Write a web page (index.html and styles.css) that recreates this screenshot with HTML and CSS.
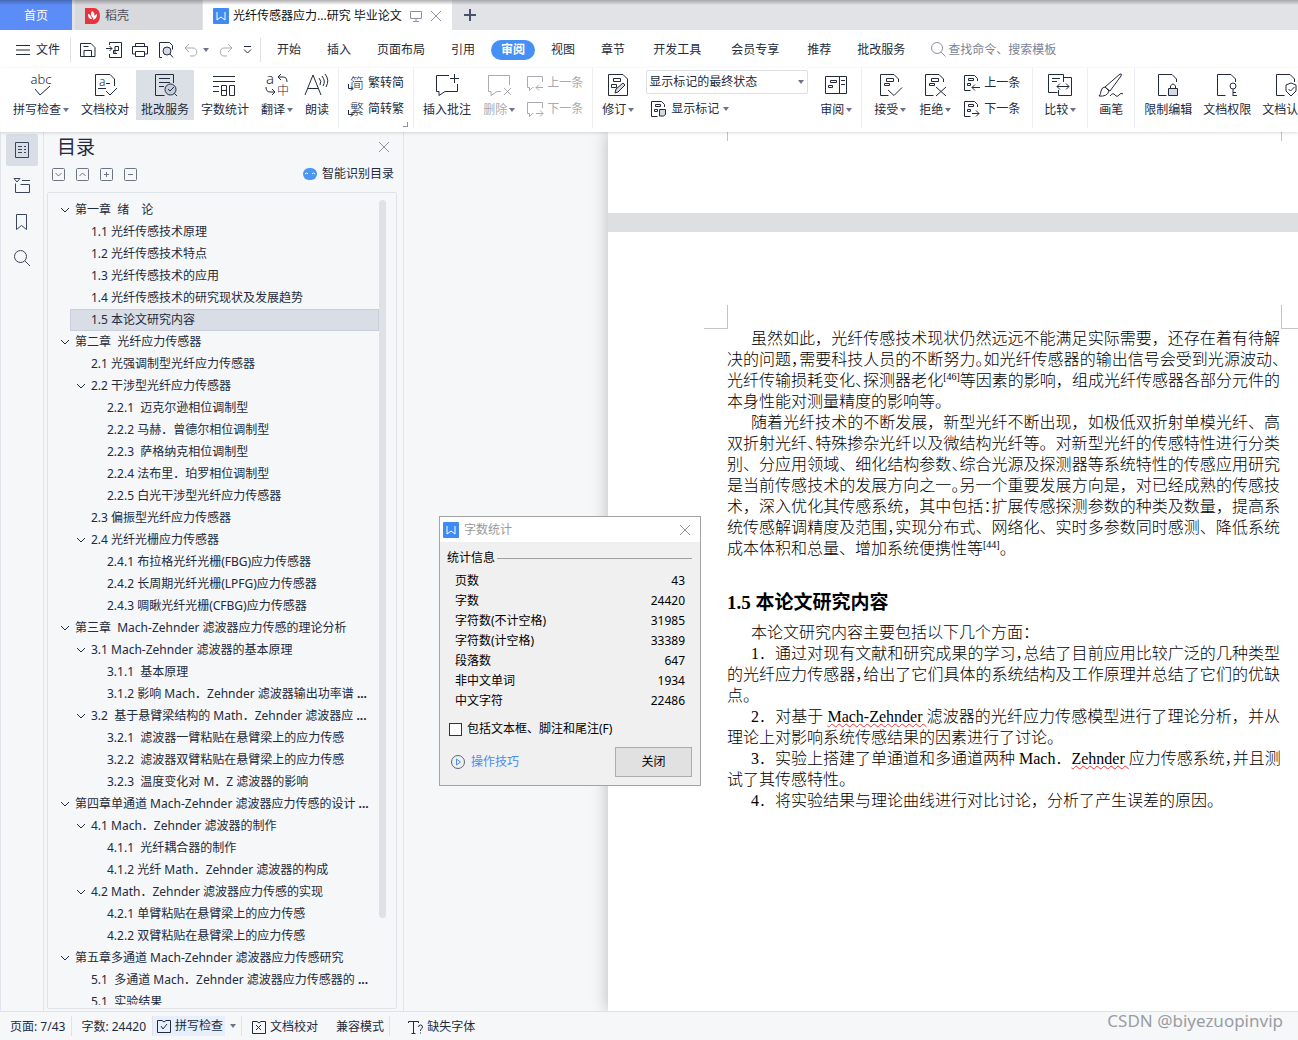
FILE: index.html
```html
<!DOCTYPE html>
<html lang="zh-CN">
<head>
    <meta charset="UTF-8">
    <title>光纤传感器应力...研究 毕业论文</title>
    <link rel="stylesheet" href="styles.css">
</head>
<body>
    <svg class="sprite" aria-hidden="true">
        <symbol id="arrow" viewBox="0 0 6 4"><path d="M0 0h6L3 4z" fill="#6b7489" stroke="none"/></symbol>
        <symbol id="close" viewBox="0 0 12 12"><path d="M1 1l10 10M11 1L1 11"/></symbol>
        <symbol id="chevron" viewBox="0 0 10 10"><path d="M1 3l4 4 4-4"/></symbol>
        <symbol id="wps" viewBox="0 0 16 16"><rect width="16" height="16" rx="1" fill="#3f8bf5" stroke="none"/><path d="M4 4v8l4-3 4 3V4" stroke="#fff"/></symbol>
        <symbol id="comment" viewBox="0 0 16 16"><path d="M15.500 7V1.500H.5v11h2v3l3-3h1"/></symbol>
        <symbol id="changes" viewBox="0 0 16 16"><path d="M13.500 6V3.500l-3-3H.5v15h6M4.500 3.500h5v2h-5zM3.500 8.500h3v2h-3z"/></symbol>
        <symbol id="doc" viewBox="0 0 24 24"><path d="M20.500 9V6L16 1.500H2.500v21h8"/></symbol>
    </svg>

    <nav class="tabs">
        <a class="tab tab-home" href="#">首页</a>
        <a class="tab tab-docer" href="#">
            <svg width="15" height="16" viewBox="0 0 15 16"><path d="M0 0h9a6 8 0 0 1 0 16H0z" fill="#e8323c" stroke="none"/><path d="M7 3c3 2 3 4 1 7-2-2-3-4-1-7zM3 6c2 0 3 2 4 5-3 0-4-2-4-5zM12 6c0 3-1 5-4 6 0-3 1-5 4-6z" fill="#fff" stroke="none"/></svg>
            稻壳
        </a>
        <div class="tab tab-active">
            <svg width="16" height="16"><use href="#wps"/></svg>
            <span>光纤传感器应力...研究 毕业论文</span>
            <svg class="muted" width="12" height="12" viewBox="0 0 12 12"><path d="M.5 1.500h11v7H.5zM6 8.500v3M3 11.500h6"/></svg>
            <button class="plain muted" aria-label="关闭标签"><svg width="12" height="12"><use href="#close"/></svg></button>
        </div>
        <button class="plain tab-new" aria-label="新建"><svg width="12" height="12" viewBox="0 0 12 12"><path d="M6 0v12M0 6h12" stroke-width="2"/></svg></button>
    </nav>

    <header class="menu">
        <button class="plain file-btn"><svg width="14" height="10" viewBox="0 0 14 10"><path d="M0 .5h14M0 5h14M0 9.500h14"/></svg>文件</button>
        <div class="quick">
            <button class="plain" aria-label="保存"><svg width="16" height="16" viewBox="0 0 16 16"><path d="M.5 1.500h10.500l4 4v9H.5zM4 14V8.500h7.500V14M3.500 4.500h5"/></svg></button>
            <button class="plain" aria-label="输出PDF"><svg width="16" height="16" viewBox="0 0 16 16"><path d="M3.500 3V.5h12v15h-12V12M0 6.500h6M3.500 4l2.500 2.500L3.500 9M9 11V4.500h3.500v4H7.500v3H11"/></svg></button>
            <button class="plain" aria-label="打印"><svg width="16" height="16" viewBox="0 0 16 16"><path d="M3.500 4V1.500h9V4M3.500 12H.5V4.500h15V12h-3M3.500 9.500h9v5h-9z"/></svg></button>
            <button class="plain" aria-label="打印预览"><svg width="16" height="16" viewBox="0 0 16 16"><path d="M4 15.500H1.500V.5h10l3 3v4M12 12l3 3.500"/><circle cx="9" cy="9" r="4" fill="#d5dae2"/></svg></button>
            <button class="plain dim" aria-label="撤销"><svg width="14" height="14" viewBox="0 0 14 14"><path d="M5 1L1 5l4 4M1 5h8c5 0 5 8 0 8H6"/></svg><svg width="6" height="4"><use href="#arrow"/></svg></button>
            <button class="plain dim" aria-label="恢复"><svg width="14" height="14" viewBox="0 0 14 14"><path d="M9 1l4 4-4 4M13 5H5c-5 0-5 8 0 8h3"/></svg></button>
            <button class="plain" aria-label="更多"><svg width="9" height="8" viewBox="0 0 9 8"><path d="M1 .5h7M1 3.500l3.500 3.500L8 3.500"/></svg></button>
        </div>
        <nav class="menu-items">
            <a href="#">开始</a>
            <a href="#">插入</a>
            <a href="#">页面布局</a>
            <a href="#">引用</a>
            <a class="current" href="#">审阅</a>
            <a href="#">视图</a>
            <a href="#">章节</a>
            <a class="long" href="#">开发工具</a>
            <a class="long" href="#">会员专享</a>
            <a href="#">推荐</a>
            <a href="#">批改服务</a>
        </nav>
        <label class="search">
            <svg width="15" height="15" viewBox="0 0 15 15"><circle cx="6" cy="6" r="5.500"/><path d="M10 10l4.500 4.500"/></svg>
            <input type="text" placeholder="查找命令、搜索模板">
        </label>
    </header>

    <div class="ribbon">
        <div class="group">
            <button class="tool">
                <svg width="24" height="24" viewBox="0 0 24 24"><text x="12" y="11" font-size="13" text-anchor="middle">abc</text><path d="M6 16l5 6 10-9"/></svg>
                <span>拼写检查<svg width="6" height="4"><use href="#arrow"/></svg></span>
            </button>
            <button class="tool">
                <svg width="24" height="24" viewBox="0 0 24 24"><path d="M21.500 13V6L17 1.500H2.500v21h9M13 18l4 4 7-7M13 10.500h4M5 15.500h8"/><text x="6" y="13" font-size="12">a</text></svg>
                <span>文档校对</span>
            </button>
            <button class="tool pressed">
                <svg width="24" height="24" viewBox="0 0 24 24"><path d="M20.500 10V1.500h-18v21h9M6 5.500h11M6 9.500h11M6 13.500h5M21 20l3 3"/><circle cx="17.500" cy="16.500" r="5.500" fill="#c3ccd9"/><path d="M15 16l2 2 4-4"/></svg>
                <span>批改服务</span>
            </button>
            <button class="tool">
                <svg width="24" height="24" viewBox="0 0 24 24"><path d="M0 3.500h22M0 8.500h22M0 13.500h6M0 18.500h6M8.500 12.500h5v10h-5zM16.500 12.500h5v10h-5zM8.500 17.500h5"/></svg>
                <span>字数统计</span>
            </button>
            <button class="tool">
                <svg width="24" height="24" viewBox="0 0 24 24"><text x="1" y="11" font-size="15">a</text><text x="12" y="22" font-size="12">中</text><path d="M16 1l-3 3 3 3M13 4h5q4 0 4 5M1 14q0 5 4 5h5M7 16l3 3-3 3"/></svg>
                <span>翻译<svg width="6" height="4"><use href="#arrow"/></svg></span>
            </button>
            <button class="tool">
                <svg width="24" height="24" viewBox="0 0 24 24"><path d="M0 22L8 2l8 20M3 15.500h10M14 5q3 3 1 7M17 3q4 5 1 10M20 1q5 6 1 13"/></svg>
                <span>朗读</span>
            </button>
        </div>
        <div class="group corner">
            <div class="stack">
                <button class="mini"><svg width="16" height="16" viewBox="0 0 16 16"><text x="2" y="13" font-size="14">简</text><path d="M.5 9v4.500h4M3 11.500l2 2-2 2"/></svg>繁转简</button>
                <button class="mini"><svg width="16" height="16" viewBox="0 0 16 16"><text x="2" y="13" font-size="14">繁</text><path d="M.5 9v4.500h4M3 11.500l2 2-2 2"/></svg>简转繁</button>
            </div>
        </div>
        <div class="group">
            <button class="tool">
                <svg width="24" height="24" viewBox="0 0 24 24"><path d="M14 2.500H1.500v16H4v4l6-4h12.500V11M19.500 1v9M15 5.500h9"/></svg>
                <span>插入批注</span>
            </button>
            <button class="tool dim" disabled>
                <svg width="24" height="24" viewBox="0 0 24 24"><path d="M22.500 12V2.500h-21v16H4v4l6-4h4M17 15l7 7M24 15l-7 7"/></svg>
                <span>删除<svg width="6" height="4"><use href="#arrow"/></svg></span>
            </button>
            <div class="stack">
                <button class="mini dim" disabled><svg width="16" height="16" viewBox="0 0 16 16"><use href="#comment" width="16" height="16"/><path d="M16 12.500H9M12 9.500l-3 3 3 3"/></svg>上一条</button>
                <button class="mini dim" disabled><svg width="16" height="16" viewBox="0 0 16 16"><use href="#comment" width="16" height="16"/><path d="M9 12.500h7M13 9.500l3 3-3 3"/></svg>下一条</button>
            </div>
        </div>
        <div class="group">
            <button class="tool">
                <svg width="24" height="24" viewBox="0 0 24 24"><path d="M21.500 22.500h-19v-21H17L21.500 6zM7.500 5.500h7v3h-7zM5.500 11.500h5v3h-5z"/><path d="M9 20l1-4 7-6 2 2-7 7z" fill="#d5dae2"/></svg>
                <span>修订<svg width="6" height="4"><use href="#arrow"/></svg></span>
            </button>
            <div class="stack markup">
                <div class="picker">
                    <select aria-label="标记状态"><option>显示标记的最终状态</option></select>
                    <svg width="6" height="4"><use href="#arrow"/></svg>
                </div>
                <button class="mini"><svg width="16" height="16" viewBox="0 0 16 16"><use href="#changes" width="16" height="16"/><path d="M8.500 8.500h6v5l-2 1.500h-4z" fill="#d5dae2"/></svg>显示标记<svg width="6" height="4"><use href="#arrow"/></svg></button>
            </div>
            <button class="tool">
                <svg width="24" height="24" viewBox="0 0 24 24"><path d="M1.500 3.500h21v17h-21zM15.500 3.500v17M6.500 7.500h6v2h-6zM4.500 12.500h4v2h-4zM17 7.500h4M17 11.500h4"/></svg>
                <span>审阅<svg width="6" height="4"><use href="#arrow"/></svg></span>
            </button>
        </div>
        <div class="group roomy">
            <button class="tool">
                <svg width="24" height="24" viewBox="0 0 24 24"><use href="#doc" width="24" height="24"/><path d="M8.500 5.500h7v3h-7zM6.500 10.500h5v2h-5zM10 17l6 5.500 8-8"/></svg>
                <span>接受<svg width="6" height="4"><use href="#arrow"/></svg></span>
            </button>
            <button class="tool">
                <svg width="24" height="24" viewBox="0 0 24 24"><use href="#doc" width="24" height="24"/><path d="M8.500 5.500h7v3h-7zM6.500 10.500h5v2h-5zM13 14l10 9M23 14l-10 9"/></svg>
                <span>拒绝<svg width="6" height="4"><use href="#arrow"/></svg></span>
            </button>
            <div class="stack">
                <button class="mini"><svg width="16" height="16" viewBox="0 0 16 16"><use href="#changes" width="16" height="16"/><path d="M16 12.500H8M11 9.500l-3 3 3 3"/></svg>上一条</button>
                <button class="mini"><svg width="16" height="16" viewBox="0 0 16 16"><use href="#changes" width="16" height="16"/><path d="M8 12.500h7M12 9.500l3 3-3 3"/></svg>下一条</button>
            </div>
        </div>
        <div class="group single">
            <button class="tool">
                <svg width="24" height="24" viewBox="0 0 24 24"><path d="M15.500 9V1.500H.5v18h9M15.500 4.500h8v18h-13V17M4 5.500h8M4 8.500h5M9 13.500h12M12 10.500l-3 3 3 3M18 10.500l3 3-3 3"/></svg>
                <span>比较<svg width="6" height="4"><use href="#arrow"/></svg></span>
            </button>
        </div>
        <div class="group single">
            <button class="tool">
                <svg width="24" height="24" viewBox="0 0 24 24"><path d="M6 14L21 1q2-1 1 2L11 18zM6 14q-3 0-4 4 0 3-2 5 8 1 10-5zM11 23q3-4 5-1t4 0 4-1"/></svg>
                <span>画笔</span>
            </button>
        </div>
        <div class="group protect">
            <button class="tool">
                <svg width="24" height="24" viewBox="0 0 24 24"><use href="#doc" width="24" height="24"/><path d="M12.500 15.500h9v7h-9z" fill="#d5dae2"/><path d="M14.500 15v-2q2.500-4 5 0v2"/></svg>
                <span>限制编辑</span>
            </button>
            <button class="tool">
                <svg width="24" height="24" viewBox="0 0 24 24"><use href="#doc" width="24" height="24"/><circle cx="18" cy="13" r="3" fill="#fff"/><path d="M18 16v7M18 19.500h3M18 22.500h4"/></svg>
                <span>文档权限</span>
            </button>
            <button class="tool">
                <svg width="24" height="24" viewBox="0 0 24 24"><use href="#doc" width="24" height="24"/><path d="M17 10l5 2v6l-5 5-5-5v-6z" fill="#fff"/><path d="M14.500 16l2 2 4-4"/></svg>
                <span>文档认证</span>
            </button>
        </div>
    </div>

    <main class="workspace">
        <nav class="rail">
            <button class="plain on" aria-label="目录"><svg width="16" height="16" viewBox="0 0 16 16"><path d="M1.500.5h13v15h-13zM4 4.500h4M10 4.500h2M4 7.500h4M10 7.500h2M4 10.500h4M10 10.500h2"/></svg></button>
            <button class="plain" aria-label="章节"><svg width="16" height="16" viewBox="0 0 16 16"><path d="M0 .5h6L3 4zM8 2.500h8M1.500 5.500v9h14v-8h-9"/></svg></button>
            <button class="plain" aria-label="书签"><svg width="16" height="16" viewBox="0 0 16 16"><path d="M2.500.5h10v15l-5-4-5 4z"/></svg></button>
            <button class="plain" aria-label="查找"><svg width="16" height="16" viewBox="0 0 16 16"><circle cx="6.500" cy="6.500" r="6"/><path d="M11 11l5 5"/></svg></button>
        </nav>

        <aside class="outline">
            <div class="outline-head">
                <h2>目录</h2>
                <button class="plain muted" aria-label="关闭目录"><svg width="12" height="12"><use href="#close"/></svg></button>
            </div>
            <div class="outline-tools">
                <button class="plain" aria-label="展开"><svg width="13" height="13" viewBox="0 0 13 13"><rect x=".5" y=".5" width="12" height="12" rx="1"/><path d="M3.500 5l3 3 3-3"/></svg></button>
                <button class="plain" aria-label="收起"><svg width="13" height="13" viewBox="0 0 13 13"><rect x=".5" y=".5" width="12" height="12" rx="1"/><path d="M3.500 8l3-3 3 3"/></svg></button>
                <button class="plain" aria-label="增加级别"><svg width="13" height="13" viewBox="0 0 13 13"><rect x=".5" y=".5" width="12" height="12" rx="1"/><path d="M4 6.500h5M6.500 4v5"/></svg></button>
                <button class="plain" aria-label="减少级别"><svg width="13" height="13" viewBox="0 0 13 13"><rect x=".5" y=".5" width="12" height="12" rx="1"/><path d="M4 6.500h5"/></svg></button>
                <a class="smart" href="#"><svg width="14" height="12" viewBox="0 0 14 12"><rect width="14" height="12" rx="6" fill="#4a96f2" stroke="none"/><path d="M2 6q1.500-2 3 0M9 6q1.500-2 3 0" stroke="#fff"/></svg>智能识别目录</a>
            </div>
            <div class="outline-box">
                <div class="toc">
                    <a class="l1" href="#"><svg width="10" height="10"><use href="#chevron"/></svg>第一章  绪　论</a>
                    <a class="l2" href="#">1.1 光纤传感技术原理</a>
                    <a class="l2" href="#">1.2 光纤传感技术特点</a>
                    <a class="l2" href="#">1.3 光纤传感技术的应用</a>
                    <a class="l2" href="#">1.4 光纤传感技术的研究现状及发展趋势</a>
                    <a class="l2 selected" href="#">1.5 本论文研究内容</a>
                    <a class="l1" href="#"><svg width="10" height="10"><use href="#chevron"/></svg>第二章  光纤应力传感器</a>
                    <a class="l2" href="#">2.1 光强调制型光纤应力传感器</a>
                    <a class="l2 open" href="#"><svg width="10" height="10"><use href="#chevron"/></svg>2.2 干涉型光纤应力传感器</a>
                    <a class="l3" href="#">2.2.1  迈克尔逊相位调制型</a>
                    <a class="l3" href="#">2.2.2 马赫．曾德尔相位调制型</a>
                    <a class="l3" href="#">2.2.3  萨格纳克相位调制型</a>
                    <a class="l3" href="#">2.2.4 法布里．珀罗相位调制型</a>
                    <a class="l3" href="#">2.2.5 白光干涉型光纤应力传感器</a>
                    <a class="l2" href="#">2.3 偏振型光纤应力传感器</a>
                    <a class="l2 open" href="#"><svg width="10" height="10"><use href="#chevron"/></svg>2.4 光纤光栅应力传感器</a>
                    <a class="l3" href="#">2.4.1 布拉格光纤光栅(FBG)应力传感器</a>
                    <a class="l3" href="#">2.4.2 长周期光纤光栅(LPFG)应力传感器</a>
                    <a class="l3" href="#">2.4.3 啁瞅光纤光栅(CFBG)应力传感器</a>
                    <a class="l1" href="#"><svg width="10" height="10"><use href="#chevron"/></svg>第三章  Mach-Zehnder 滤波器应力传感的理论分析</a>
                    <a class="l2 open" href="#"><svg width="10" height="10"><use href="#chevron"/></svg>3.1 Mach-Zehnder 滤波器的基本原理</a>
                    <a class="l3" href="#">3.1.1  基本原理</a>
                    <a class="l3" href="#">3.1.2 影响 Mach．Zehnder 滤波器输出功率谱 <b>...</b></a>
                    <a class="l2 open" href="#"><svg width="10" height="10"><use href="#chevron"/></svg>3.2  基于悬臂梁结构的 Math．Zehnder 滤波器应 <b>...</b></a>
                    <a class="l3" href="#">3.2.1  滤波器一臂粘贴在悬臂梁上的应力传感</a>
                    <a class="l3" href="#">3.2.2  滤波器双臂粘贴在悬臂梁上的应力传感</a>
                    <a class="l3" href="#">3.2.3  温度变化对 M．Z 滤波器的影响</a>
                    <a class="l1" href="#"><svg width="10" height="10"><use href="#chevron"/></svg>第四章单通道 Mach-Zehnder 滤波器应力传感的设计 <b>...</b></a>
                    <a class="l2 open" href="#"><svg width="10" height="10"><use href="#chevron"/></svg>4.1 Mach．Zehnder 滤波器的制作</a>
                    <a class="l3" href="#">4.1.1  光纤耦合器的制作</a>
                    <a class="l3" href="#">4.1.2 光纤 Math．Zehnder 滤波器的构成</a>
                    <a class="l2 open" href="#"><svg width="10" height="10"><use href="#chevron"/></svg>4.2 Math．Zehnder 滤波器应力传感的实现</a>
                    <a class="l3" href="#">4.2.1 单臂粘贴在悬臂梁上的应力传感</a>
                    <a class="l3" href="#">4.2.2 双臂粘贴在悬臂梁上的应力传感</a>
                    <a class="l1" href="#"><svg width="10" height="10"><use href="#chevron"/></svg>第五章多通道 Mach-Zehnder 滤波器应力传感研究</a>
                    <a class="l2" href="#">5.1  多通道 Mach．Zehnder 滤波器应力传感器的 <b>...</b></a>
                    <a class="l2" href="#">5.1  实验结果</a>
                </div>
                <div class="scrollbar"></div>
            </div>
        </aside>

        <section class="canvas">
            <div class="sheets">
                <div class="sheet sheet-prev">
                    <div class="marks"><i></i><i></i></div>
                </div>
                <article class="sheet sheet-current">
                    <div class="marks"><i></i><i></i></div>
                    <div class="text">
                        <p>
                            <span class="line first">虽然如此，光纤传感技术现状仍然远远不能满足实际需要，还存在着有待解</span>
                            <span class="line tight">决的问题，需要科技人员的不断努力。如光纤传感器的输出信号会受到光源波动、</span>
                            <span class="line">光纤传输损耗变化<span class="tight">、</span>探测器老化<sup>[46]</sup>等因素的影响，组成光纤传感器各部分元件的</span>
                            <span class="line end">本身性能对测量精度的影响等。</span>
                        </p>
                        <p>
                            <span class="line first">随着光纤技术的不断发展，新型光纤不断出现，如极低双折射单模光纤、高</span>
                            <span class="line">双折射光纤<span class="tight">、</span>特殊掺杂光纤以及微结构光纤等。对新型光纤的传感特性进行分类</span>
                            <span class="line">别、分应用领域、细化结构参数<span class="tight">、</span>综合光源及探测器等系统特性的传感应用研究</span>
                            <span class="line">是当前传感技术的发展方向之一<span class="tight">。</span>另一个重要发展方向是，对已经成熟的传感技</span>
                            <span class="line">术，深入优化其传感系统，其中包括<span class="tight">：</span>扩展传感探测参数的种类及数量，提高系</span>
                            <span class="line">统传感解调精度及范围<span class="tight">，</span>实现分布式、网络化、实时多参数同时感测、降低系统</span>
                            <span class="line end">成本体积和总量、增加系统便携性等<sup>[44]</sup>。</span>
                        </p>
                        <h3>1.5 本论文研究内容</h3>
                        <p>
                            <span class="line first end">本论文研究内容主要包括以下几个方面：</span>
                        </p>
                        <p>
                            <span class="line first">1．通过对现有文献和研究成果的学习<span class="tight">，</span>总结了目前应用比较广泛的几种类型</span>
                            <span class="line">的光纤应力传感器<span class="tight">，</span>给出了它们具体的系统结构及工作原理并总结了它们的优缺</span>
                            <span class="line end">点。</span>
                        </p>
                        <p>
                            <span class="line first">2．对基于 <u>Mach-Zehnder </u>滤波器的光纤应力传感模型进行了理论分析，并从</span>
                            <span class="line end">理论上对影响系统传感结果的因素进行了讨论。</span>
                        </p>
                        <p>
                            <span class="line first">3．实验上搭建了单通道和多通道两种 Mach．<u>Zehnder </u>应力传感系统<span class="tight">，</span>并且测</span>
                            <span class="line end">试了其传感特性。</span>
                        </p>
                        <p>
                            <span class="line first end">4．将实验结果与理论曲线进行对比讨论，分析了产生误差的原因。</span>
                        </p>
                    </div>
                </article>
            </div>
        </section>
    </main>

    <footer class="status">
        <span class="cell ruled">页面: 7/43</span>
        <span class="cell ruled">字数: 24420</span>
        <button class="plain cell spell"><svg width="16" height="14" viewBox="0 0 16 14"><path d="M6 1.500H1.500v12h13v-12H10L8 3zM5 7l2 3 4-5"/></svg>拼写检查</button>
        <button class="plain cell ruled spell-more" aria-label="拼写检查选项"><svg width="6" height="4"><use href="#arrow"/></svg></button>
        <button class="plain cell"><svg width="16" height="14" viewBox="0 0 16 14"><path d="M6 1.500H1.500v12h13v-12H10L8 3zM5 5l5 5M10 5l-5 5"/></svg>文档校对</button>
        <span class="cell ruled compat">兼容模式</span>
        <button class="plain cell fonts"><svg width="16" height="14" viewBox="0 0 16 14"><path d="M.5 3V1.500h10V3M5.500 1.500v12M3.500 13.500h4M10.500 7q0-2 2-2t2 2q0 1-2 3v1M12.500 12.500v1"/></svg>缺失字体</button>
        <span class="watermark">CSDN @biyezuopinvip</span>
    </footer>

    <div class="dialog" role="dialog" aria-labelledby="dialog-title">
        <div class="dialog-title">
            <svg width="16" height="16"><use href="#wps"/></svg>
            <span id="dialog-title">字数统计</span>
            <button class="plain" aria-label="关闭对话框"><svg width="12" height="12"><use href="#close"/></svg></button>
        </div>
        <div class="dialog-body">
            <div class="legend">统计信息</div>
            <table>
                <tr><th>页数</th><td>43</td></tr>
                <tr><th>字数</th><td>24420</td></tr>
                <tr><th>字符数(不计空格)</th><td>31985</td></tr>
                <tr><th>字符数(计空格)</th><td>33389</td></tr>
                <tr><th>段落数</th><td>647</td></tr>
                <tr><th>非中文单词</th><td>1934</td></tr>
                <tr><th>中文字符</th><td>22486</td></tr>
            </table>
            <label class="check"><input type="checkbox">包括文本框、脚注和尾注(F)</label>
            <div class="dialog-foot">
                <a href="#"><svg width="14" height="14" viewBox="0 0 14 14"><circle cx="7" cy="7" r="6.500" stroke="#5b6780"/><path d="M5.500 4l4 3-4 3z"/></svg>操作技巧</a>
                <button>关闭</button>
            </div>
        </div>
    </div>
</body>
</html>
```
FILE: styles.css
```css
* {
    box-sizing: border-box;
}
body {
    margin: 0;
    height: 100vh;
    display: flex;
    flex-direction: column;
    overflow: hidden;
    background: #fff;
    color: #222b3d;
    font-family: "Noto Sans", "Noto Sans CJK SC", sans-serif;
    font-size: 12px;
    line-height: 16px;
}
a {
    color: inherit;
    text-decoration: none;
}
button, input, select {
    font: inherit;
    color: inherit;
}
svg {
    flex: none;
    overflow: visible;
    fill: none;
    stroke: currentColor;
}
svg text {
    fill: currentColor;
    stroke: none;
    font-weight: 300;
}
.sprite {
    position: absolute;
    width: 0;
    height: 0;
}
.plain {
    display: flex;
    align-items: center;
    padding: 0;
    border: 0;
    background: none;
}
.muted {
    color: #8d94a6;
}
.dim {
    color: #a9abb0;
}

/* document tabs */
.tabs {
    flex: none;
    height: 30px;
    display: flex;
    background: linear-gradient(#a5a6a9, #e1e3e7 5px);
}
.tab {
    display: flex;
    align-items: center;
    gap: 5px;
    padding: 1px 10px 0;
}
.tab-home {
    width: 72px;
    justify-content: center;
    background: linear-gradient(#4568b5, #5b8cf7 5px);
    color: #fff;
}
.tab-docer {
    width: 127px;
    margin-left: 3px;
    background: linear-gradient(#9d9ea1, #d8d9dc 5px);
    color: #4a4f5a;
}
.tab-active {
    gap: 4px;
    margin-left: 1px;
    background: linear-gradient(#b0b0b0, #fff 5px);
    color: #111;
}
.tab-active svg.muted {
    margin: 0 4px;
}
.tab-new {
    margin-left: 12px;
    color: #48536b;
}

/* menu row */
.menu {
    flex: none;
    height: 38px;
    display: flex;
    align-items: center;
    padding-top: 1px;
}
.file-btn {
    gap: 6px;
    padding: 0 10px 0 16px;
}
.quick {
    height: 24px;
    display: flex;
    align-items: center;
    gap: 10px;
    padding: 0 8px 0 9px;
    border-left: 1px solid #dfe1e6;
    border-right: 1px solid #dfe1e6;
}
.quick .plain {
    gap: 5px;
}
.menu-items {
    display: flex;
    gap: 6px;
    padding-left: 6px;
}
.menu-items a {
    padding: 2px 10px;
    border-radius: 10px;
    white-space: nowrap;
}
.menu-items .long {
    padding: 2px 12px;
}
.menu-items .current {
    background: #4690f5;
    color: #fff;
    font-weight: bold;
}
.search {
    display: flex;
    align-items: center;
    gap: 2px;
    padding-left: 16px;
    color: #8b93a7;
}
.search input {
    width: 160px;
    padding: 0;
    border: 0;
    background: none;
}
.search input::placeholder {
    color: #7b8398;
}

/* ribbon */
.ribbon {
    position: relative;
    z-index: 1;
    flex: none;
    height: 64px;
    display: flex;
    align-items: flex-start;
    padding-left: 4px;
    background: #fff;
    box-shadow: 0 1px 3px rgba(0, 0, 0, 0.15);
}
.group {
    flex: none;
    height: 60px;
    display: flex;
    align-items: flex-start;
    gap: 2px;
    padding: 2px 4px 0;
    border-right: 1px solid #eceef1;
}
.group.roomy {
    gap: 3px;
    padding: 2px 7px 0;
}
.group.single {
    padding: 2px 6px 0;
}
.group.protect {
    gap: 1px;
    border-right: 0;
}
.group.corner {
    background: linear-gradient(#8b93a7, #8b93a7) 64px 58px / 5px 1px no-repeat,
        linear-gradient(#8b93a7, #8b93a7) 68px 54px / 1px 5px no-repeat;
}
.tool {
    height: 50px;
    display: flex;
    flex-direction: column;
    align-items: center;
    gap: 5px;
    padding: 3px 5px 2px;
    border: 0;
    background: none;
    white-space: nowrap;
}
.tool.pressed {
    background: #dbe0e6;
}
.tool span {
    display: flex;
    align-items: center;
    gap: 2px;
}
.stack {
    display: flex;
    flex-direction: column;
    align-items: flex-start;
    gap: 2px;
}
.mini {
    height: 24px;
    display: flex;
    align-items: center;
    gap: 4px;
    padding: 1px 5px 0;
    border: 0;
    background: none;
    white-space: nowrap;
}
.tool.dim, .mini.dim {
    color: #a9abb0;
}
.picker {
    width: 162px;
    height: 24px;
    margin: 0 5px;
    display: grid;
    align-items: center;
    border: 1px solid #dcdfe4;
    border-radius: 2px;
}
.picker select, .picker svg {
    grid-area: 1 / 1;
}
.picker select {
    width: 100%;
    padding: 0 2px;
    border: 0;
    background: none;
    appearance: none;
}
.picker svg {
    justify-self: end;
    margin-right: 3px;
    pointer-events: none;
}
.markup .mini {
    padding-left: 10px;
}

/* workspace */
.workspace {
    flex: 1;
    min-height: 0;
    display: flex;
    background: #f5f7f9;
}
.rail {
    width: 44px;
    flex: none;
    display: flex;
    flex-direction: column;
    gap: 4px;
    padding: 2px 5px;
    border-left: 1px solid #e1e4ea;
    border-right: 1px solid #e1e4ea;
    color: #3a445a;
}
.rail .plain {
    width: 32px;
    height: 32px;
    justify-content: center;
    border-radius: 2px;
}
.rail .on {
    background: #d9dee6;
}
.outline {
    width: 360px;
    flex: none;
    display: flex;
    flex-direction: column;
    padding: 0 6px 2px 3px;
    border-right: 1px solid #e1e4ea;
}
.outline-head {
    height: 30px;
    display: flex;
    align-items: center;
    justify-content: space-between;
    padding: 0 7px 0 10px;
}
.outline-head h2 {
    margin: 0;
    font-size: 19px;
    font-weight: normal;
    line-height: 24px;
}
.outline-tools {
    height: 30px;
    display: flex;
    align-items: center;
    gap: 11px;
    padding: 0 3px 6px 5px;
    color: #6c7485;
}
.smart {
    display: flex;
    align-items: center;
    gap: 5px;
    margin-left: auto;
    color: #222b3d;
}
.outline-box {
    flex: 1;
    min-height: 0;
    display: flex;
    padding: 6px 10px 3px 0;
    border: 1px solid #e0e3e8;
    border-radius: 2px;
}
.toc {
    flex: 1;
    min-width: 0;
    overflow: hidden;
}
.toc a {
    height: 22px;
    display: flex;
    align-items: center;
    white-space: pre;
}
.toc svg {
    margin-right: 5px;
}
.toc .l1 {
    padding-left: 12px;
}
.toc .l2 {
    margin-left: 22px;
    padding-left: 21px;
}
.toc .l2.open {
    padding-left: 6px;
}
.toc .l3 {
    padding-left: 59px;
}
.toc .selected {
    padding-left: 20px;
    border: 1px solid #c9d0dc;
    background: #d9dee6;
}
.scrollbar {
    width: 7px;
    height: 718px;
    margin-top: 1px;
    border-radius: 4px;
    background: #dee2e6;
}

/* pages */
.canvas {
    flex: 1;
    min-width: 0;
    padding-left: 204px;
    overflow: hidden;
}
.sheets {
    width: 792px;
    height: 100%;
    display: flex;
    flex-direction: column;
    gap: 19px;
    background: #dedfe1;
    box-shadow: 0 0 16px rgba(0, 0, 0, 0.25);
}
.sheet {
    background: #fff;
}
.sheet-prev {
    flex: none;
    height: 81px;
}
.sheet-prev .marks {
    height: 9px;
}
.sheet-prev .marks i {
    border-bottom: 0;
}
.sheet-current {
    flex: 1;
    padding-top: 73px;
}
.marks {
    height: 24px;
    display: flex;
    justify-content: space-between;
    padding: 0 95px 0 96px;
}
.marks i {
    width: 24px;
    border: 0 solid #c4c4c4;
    border-width: 0 1px 1px 0;
}
.marks i + i {
    border-width: 0 0 1px 1px;
}
.text {
    margin-top: -1px;
    padding: 0 120px 0 119px;
    color: #000;
    font-family: "Liberation Serif", "Noto Sans CJK SC", serif;
    font-size: 16px;
    font-weight: 300;
    line-height: 21px;
}
.text p {
    margin: 0;
}
.line {
    display: block;
    text-align-last: justify;
    white-space: nowrap;
}
.first {
    padding-left: 24px;
}
.end {
    text-align-last: left;
}
/* half-width punctuation */
.tight {
    font-feature-settings: "halt";
}
.text sup {
    font-size: 10px;
    line-height: 0;
}
.text h3 {
    margin: 32px 0 7px;
    font-size: 19px;
    line-height: 24px;
}
.text u {
    text-decoration: underline wavy #e33 1px;
}

/* status bar */
.status {
    flex: none;
    height: 29px;
    display: flex;
    align-items: center;
    padding-left: 1px;
    border-top: 1px solid #dfe2e8;
    background: #f5f7f9;
}
.cell {
    height: 20px;
    display: flex;
    align-items: center;
    gap: 3px;
    padding: 1px 6px 0 9px;
    white-space: nowrap;
}
.ruled {
    border-right: 1px solid #dfe2e8;
}
.spell {
    padding: 0 2px 0 3px;
    background: #e6effb;
}
.spell-more {
    padding: 0 5px;
}
.compat {
    padding: 1px 5px 0 12px;
}
.fonts {
    padding-left: 18px;
}
.watermark {
    margin-left: auto;
    padding: 0 15px 10px 0;
    color: #9b9da1;
    font-size: 17px;
    line-height: 20px;
}

/* word count dialog */
.dialog {
    position: absolute;
    z-index: 2;
    left: 439px;
    top: 516px;
    width: 262px;
    border: 1px solid #a3a3a3;
    background: #f0f0f0;
    color: #000;
}
.dialog-title {
    height: 25px;
    display: flex;
    align-items: center;
    gap: 5px;
    padding: 0 9px 0 3px;
    background: #fff;
    color: #999;
}
.dialog-title .plain {
    margin-left: auto;
}
.dialog-body {
    padding: 8px;
}
.legend {
    display: flex;
    align-items: center;
    gap: 2px;
    margin-left: -1px;
}
.legend::after {
    content: "";
    flex: 1;
    height: 1px;
    background: #a0a0a0;
}
.dialog table {
    width: 100%;
    margin: 5px 0 10px;
    border-collapse: collapse;
}
.dialog th, .dialog td {
    height: 20px;
    padding: 0 7px;
    font-weight: normal;
    text-align: left;
}
.dialog td {
    text-align: right;
}
.check {
    display: flex;
    align-items: center;
    gap: 5px;
    padding-left: 1px;
}
.check input {
    width: 13px;
    height: 13px;
    margin: 0;
    border: 1px solid #333;
    background: #fff;
    appearance: none;
}
.dialog-foot {
    display: flex;
    align-items: center;
    justify-content: space-between;
    padding-top: 10px;
}
.dialog-foot a {
    display: flex;
    align-items: center;
    gap: 6px;
    padding-left: 3px;
    color: #4a8df0;
}
.dialog-foot button {
    width: 77px;
    height: 30px;
    border: 1px solid #adadad;
    background: #e1e1e1;
}
```
